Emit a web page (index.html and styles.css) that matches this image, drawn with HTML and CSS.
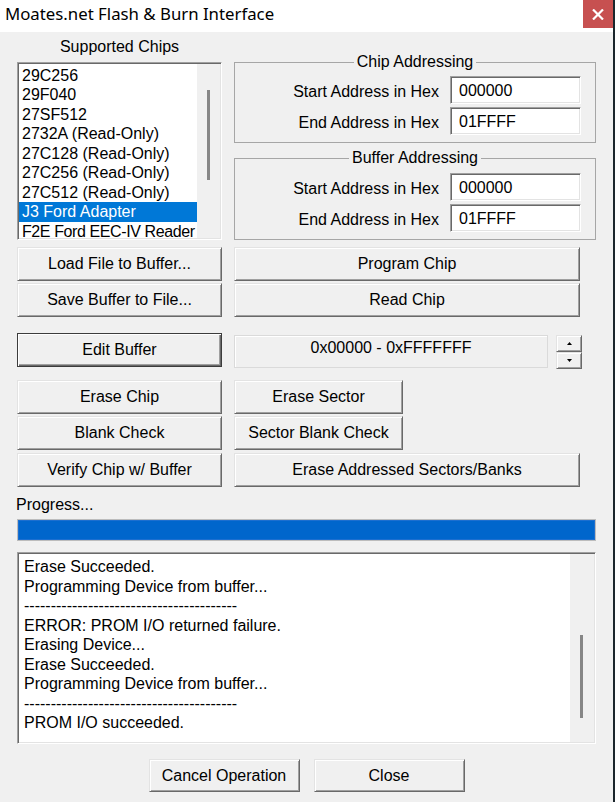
FILE: index.html
```html
<!DOCTYPE html>
<html>
<head>
<meta charset="utf-8">
<title>Moates.net Flash &amp; Burn Interface</title>
<link rel="stylesheet" href="styles.css">
</head>
<body>
<div class="window">
  <div class="titlebar">
    <span class="title">Moates.net Flash &amp; Burn Interface</span>
    <div class="close">
      <svg width="12" height="11" viewBox="0 0 12 11"><path d="M1 0.5L11 10.5M11 0.5L1 10.5" stroke="#fff" stroke-width="2.2"/></svg>
    </div>
  </div>
  <div class="client">
    <div class="top">
      <div class="chips">
        <div class="chips-label">Supported Chips</div>
        <div class="listbox sunken">
          <div class="items">
            <div class="item">29C256</div>
            <div class="item">29F040</div>
            <div class="item">27SF512</div>
            <div class="item">2732A (Read-Only)</div>
            <div class="item">27C128 (Read-Only)</div>
            <div class="item">27C256 (Read-Only)</div>
            <div class="item">27C512 (Read-Only)</div>
            <div class="item selected">J3 Ford Adapter</div>
            <div class="item tight">F2E Ford EEC-IV Reader</div>
          </div>
          <div class="track"><div class="thumb list-thumb"></div></div>
        </div>
      </div>
      <div class="groups">
        <fieldset class="group">
          <legend>Chip Addressing</legend>
          <div class="field-row"><span class="label">Start Address in Hex</span><div class="input sunken">000000</div></div>
          <div class="field-row"><span class="label">End Address in Hex</span><div class="input sunken">01FFFF</div></div>
        </fieldset>
        <fieldset class="group group2">
          <legend>Buffer Addressing</legend>
          <div class="field-row"><span class="label">Start Address in Hex</span><div class="input sunken">000000</div></div>
          <div class="field-row"><span class="label">End Address in Hex</span><div class="input sunken">01FFFF</div></div>
        </fieldset>
      </div>
    </div>

    <div class="row r1">
      <button class="btn w-left">Load File to Buffer...</button>
      <button class="btn w-wide">Program Chip</button>
    </div>
    <div class="row">
      <button class="btn w-left">Save Buffer to File...</button>
      <button class="btn w-wide">Read Chip</button>
    </div>
    <div class="row r3">
      <button class="btn default w-left">Edit Buffer</button>
      <div class="range-wrap">
        <div class="range">0x00000 - 0xFFFFFFF</div>
        <div class="spin">
          <div class="spin-btn up"><svg width="5" height="3" viewBox="0 0 5 3"><polygon points="0,3 5,3 2.5,0" fill="#000"/></svg></div>
          <div class="spin-btn down"><svg width="5" height="3" viewBox="0 0 5 3"><polygon points="0,0 5,0 2.5,3" fill="#000"/></svg></div>
        </div>
      </div>
    </div>
    <div class="row r4">
      <button class="btn w-left">Erase Chip</button>
      <button class="btn w-mid">Erase Sector</button>
    </div>
    <div class="row">
      <button class="btn w-left">Blank Check</button>
      <button class="btn w-mid">Sector Blank Check</button>
    </div>
    <div class="row r6">
      <button class="btn w-left">Verify Chip w/ Buffer</button>
      <button class="btn w-wide">Erase Addressed Sectors/Banks</button>
    </div>

    <div class="progress-label">Progress...</div>
    <div class="progress"></div>

    <div class="log sunken">
      <div class="log-text">
        <div>Erase Succeeded.</div>
        <div>Programming Device from buffer...</div>
        <div>----------------------------------------</div>
        <div>ERROR: PROM I/O returned failure.</div>
        <div>Erasing Device...</div>
        <div>Erase Succeeded.</div>
        <div>Programming Device from buffer...</div>
        <div>----------------------------------------</div>
        <div>PROM I/O succeeded.</div>
      </div>
      <div class="log-track"><div class="thumb log-thumb"></div></div>
    </div>

    <div class="bottom">
      <button class="btn bottom-btn">Cancel Operation</button>
      <button class="btn bottom-btn">Close</button>
    </div>
  </div>
</div>
</body>
</html>
```

FILE: styles.css
```css
html, body {
  margin: 0;
  padding: 0;
}
body {
  background: #1b262c;
  font-family: "Liberation Sans", Arial, sans-serif;
  font-size: 16px;
  color: #000;
}
.window {
  width: 613px;
  height: 802px;
  background: #f0f0f0;
  overflow: hidden;
}
.titlebar {
  height: 32px;
  background: #fff;
  display: flex;
  justify-content: space-between;
  align-items: flex-start;
}
.title {
  font-family: "Noto Sans", sans-serif;
  font-size: 16.8px;
  line-height: 27px;
  padding-left: 5px;
  color: #000;
}
.close {
  width: 30px;
  height: 28px;
  background: #c75050;
  display: flex;
  align-items: center;
  justify-content: center;
}
.client {
  padding: 0 17px;
}
.top {
  display: flex;
  gap: 12px;
}
.chips {
  width: 205px;
}
.chips-label {
  text-align: center;
  line-height: 20px;
  margin: 5px 0;
}
.sunken {
  border: 1px solid;
  border-color: #a0a0a0 #fff #fff #a0a0a0;
  box-shadow: inset 1px 1px #696969, inset -1px -1px #e3e3e3;
}
.listbox {
  height: 178px;
  box-sizing: border-box;
  padding: 1px;
  display: flex;
  background: #fff;
}
.items {
  width: 178px;
  overflow: hidden;
  padding-top: 1.5px;
}
.item {
  line-height: 19.5px;
  padding-left: 3px;
  white-space: nowrap;
}
.item.tight {
  letter-spacing: -0.4px;
}
.item.selected {
  background: #0078d7;
  color: #fff;
}
.track {
  width: 23px;
  background: #f0f0f0;
}
.thumb {
  width: 3px;
  margin-left: 10px;
  background: #868686;
}
.list-thumb {
  margin-top: 26px;
  height: 90px;
}
.groups {
  flex: 1;
  padding-top: 20px;
}
fieldset.group {
  margin: 0;
  padding: 4px 14px 7px;
  border: 1px solid #a6a6a6;
  min-width: 0;
}
fieldset.group2 {
  margin-top: 5px;
  padding-top: 5px;
}
legend {
  margin: 0 auto;
  padding: 0 3px;
  line-height: 20px;
}
.field-row {
  display: flex;
  justify-content: flex-end;
  align-items: center;
  gap: 11px;
  height: 28px;
}
.field-row + .field-row {
  margin-top: 3px;
}
.label {
  line-height: 20px;
  padding-top: 3px;
}
.input {
  width: 131px;
  height: 28px;
  box-sizing: border-box;
  background: #fff;
  padding: 3px 0 0 8px;
  line-height: 22px;
}
.row {
  display: flex;
  gap: 12px;
  margin-top: 2px;
}
.r1 { margin-top: 7px; }
.r3 { margin-top: 16px; }
.r4 { margin-top: 11px; }
.r6 { margin-top: 3px; }
.btn {
  height: 34px;
  box-sizing: border-box;
  font: inherit;
  color: #000;
  background: #f0f0f0;
  border: 1px solid;
  border-color: #e3e3e3 #696969 #696969 #e3e3e3;
  box-shadow: inset 1px 1px #fff, inset -1px -1px #a0a0a0;
  padding: 0;
  line-height: 20px;
}
.btn.default {
  border-color: #3c3c3c;
  box-shadow: inset 1px 1px #fff, inset -1px -1px #696969, inset -2px -2px #a0a0a0;
}
.w-left { width: 205px; }
.w-wide { width: 346px; }
.w-mid { width: 169px; }
.range-wrap {
  display: flex;
  gap: 8px;
  margin-top: 2px;
}
.range {
  width: 314px;
  height: 33px;
  box-sizing: border-box;
  border: 1px solid #dadada;
  box-shadow: inset 1px 1px #fff;
  text-align: center;
  line-height: 20px;
  padding-top: 2px;
}
.spin {
  width: 26px;
  display: flex;
  flex-direction: column;
}
.spin-btn {
  box-sizing: border-box;
  background: #f0f0f0;
  border: 1px solid;
  border-color: #e3e3e3 #696969 #696969 #e3e3e3;
  box-shadow: inset 1px 1px #fff, inset -1px -1px #a0a0a0;
  display: flex;
  align-items: center;
  justify-content: center;
}
.spin-btn.up { height: 17px; }
.spin-btn.down { height: 17px; }
.spin-btn svg { display: block; }
.progress-label {
  margin-top: 8px;
  line-height: 20px;
  margin-left: -1px;
}
.progress {
  margin-top: 4px;
  height: 22px;
  box-sizing: border-box;
  border: 1px solid #bcbcbc;
  background: #0066cc;
  box-shadow: inset 0 0 0 1px #1c6fd0;
}
.log {
  margin-top: 11px;
  height: 192px;
  box-sizing: border-box;
  padding: 1px;
  display: flex;
  background: #fff;
}
.log-text {
  flex: 1;
  padding: 3px 0 0 5px;
  line-height: 19.5px;
  white-space: nowrap;
  overflow: hidden;
}
.log-track {
  width: 24px;
  background: #f0f0f0;
}
.log-thumb {
  margin-top: 81px;
  height: 83px;
}
.bottom {
  display: flex;
  justify-content: center;
  gap: 14px;
  margin-top: 15px;
}
.bottom-btn {
  width: 151px;
  height: 33px;
}
```
